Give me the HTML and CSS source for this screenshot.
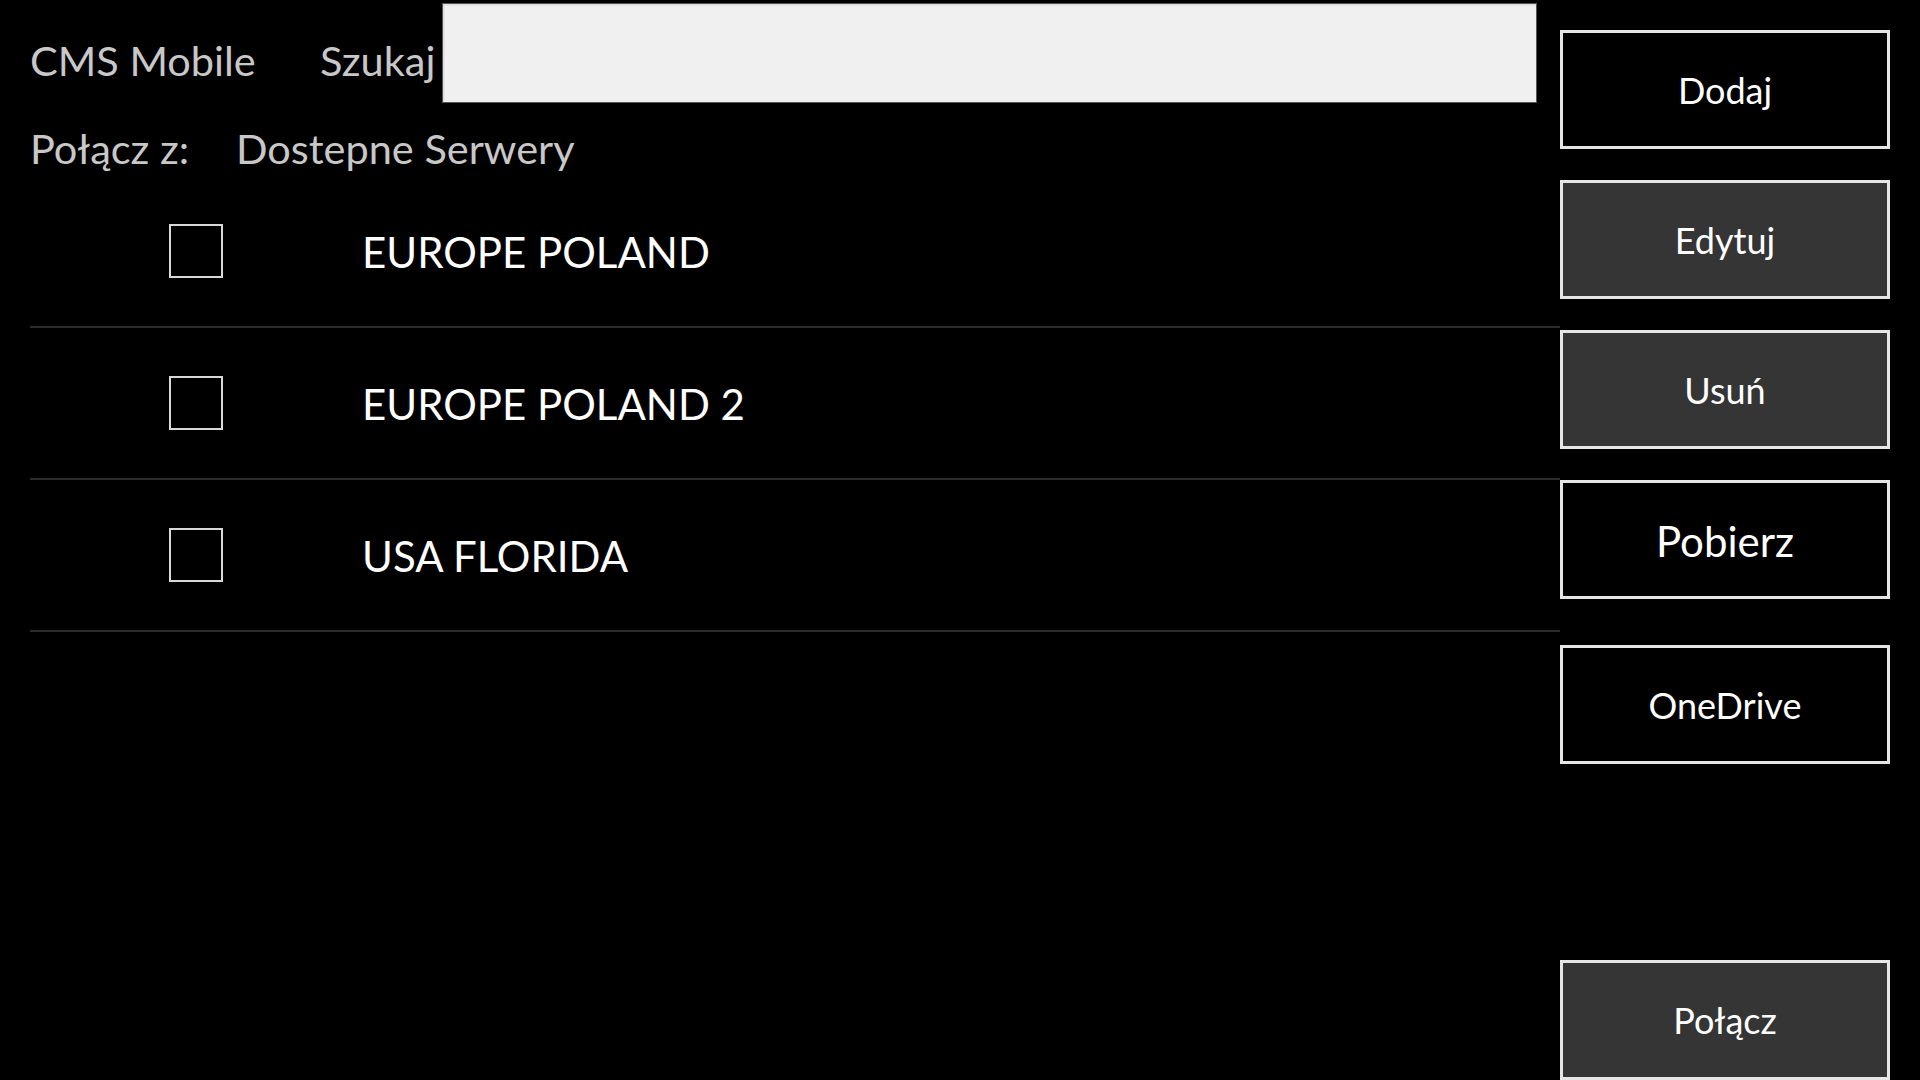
FILE: index.html
```html
<!DOCTYPE html>
<html lang="pl">
<head>
<meta charset="utf-8">
<title>CMS Mobile</title>
<link rel="stylesheet" href="styles.css">
</head>
<body>
<div class="app">
  <main class="main">
    <header class="header">
      <span class="brand">CMS Mobile</span>
      <label class="search-label" for="search">Szukaj</label>
      <input class="search" id="search" type="text">
    </header>
    <div class="connect">
      <span class="connect-label">Połącz z:</span>
      <span class="connect-value">Dostepne Serwery</span>
    </div>
    <ul class="servers">
      <li class="server"><span class="check"></span><span class="server-name">EUROPE POLAND</span></li>
      <li class="server"><span class="check"></span><span class="server-name">EUROPE POLAND 2</span></li>
      <li class="server"><span class="check"></span><span class="server-name">USA FLORIDA</span></li>
    </ul>
  </main>
  <aside class="actions">
    <button class="btn">Dodaj</button>
    <button class="btn btn-dark">Edytuj</button>
    <button class="btn btn-dark">Usuń</button>
    <button class="btn btn-large">Pobierz</button>
    <button class="btn btn-spaced">OneDrive</button>
    <button class="btn btn-dark btn-bottom">Połącz</button>
  </aside>
</div>
</body>
</html>
```
FILE: styles.css
```css
html, body {
  margin: 0;
  padding: 0;
  background: #000;
}
body {
  width: 1920px;
  height: 1080px;
  overflow: hidden;
  font-family: Lato, "Open Sans", sans-serif;
}
.app {
  display: grid;
  grid-template-columns: 1560px 330px;
  height: 1080px;
}
.main {
  padding-left: 30px;
  display: flex;
  flex-direction: column;
}
.header {
  display: flex;
  align-items: flex-start;
  height: 103px;
}
.brand,
.search-label,
.connect-label,
.connect-value {
  color: #c8c8c8;
  font-size: 41.5px;
  line-height: 50px;
  white-space: nowrap;
}
.brand {
  width: 290px;
  margin-top: 35px;
}
.search-label {
  width: 122px;
  margin-top: 35px;
}
.search {
  box-sizing: border-box;
  width: 1095px;
  height: 100px;
  margin: 3px 0 0 0;
  background: #f0f0f0;
  border: 1px solid #555;
  box-shadow: inset 1px 1px 2px rgba(0,0,0,0.12);
  outline: none;
  font-family: inherit;
  font-size: 36px;
}
.connect {
  display: flex;
  margin-top: 20px;
}
.connect-label {
  width: 206px;
}
.servers {
  list-style: none;
  margin: 3px 0 0 0;
  padding: 0;
  width: 1530px;
}
.server {
  display: flex;
  align-items: center;
  height: 150px;
  border-bottom: 2px solid #2b2b2b;
}
.check {
  box-sizing: border-box;
  width: 54px;
  height: 54px;
  margin-left: 139px;
  border: 2px solid #d8d8d8;
}
.server-name {
  margin-left: 139px;
  padding-top: 2px;
  color: #fff;
  font-size: 42px;
  line-height: 50px;
}
.actions {
  display: flex;
  flex-direction: column;
  gap: 31px;
  padding-top: 30px;
}
.btn {
  box-sizing: border-box;
  width: 330px;
  height: 119px;
  flex: none;
  margin: 0;
  padding: 0;
  background: #000;
  border: 3px solid #e6e6e6;
  color: #fff;
  font-family: Lato, "Open Sans", sans-serif;
  font-size: 36px;
  text-align: center;
}
.btn-dark {
  background: #353535;
}
.btn-large {
  font-size: 42px;
  padding-top: 2px;
}
.btn-spaced {
  margin-top: 15px;
}
.btn-bottom {
  margin-top: auto;
  height: 120px;
}
```
